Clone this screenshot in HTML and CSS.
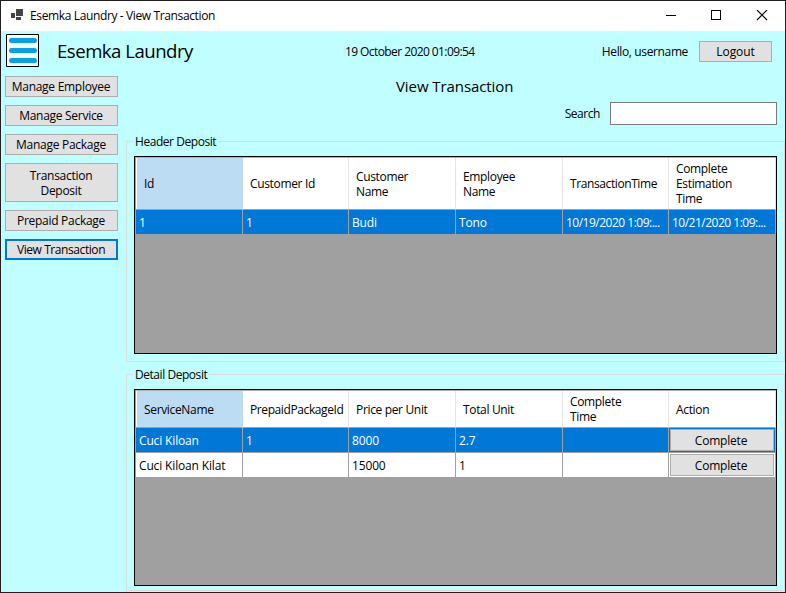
FILE: index.html
```html
<!DOCTYPE html>
<html lang="en">
<head>
<meta charset="utf-8">
<title>Esemka Laundry - View Transaction</title>
<link rel="stylesheet" href="styles.css">
</head>
<body>
<div class="window">
  <header class="titlebar">
    <svg class="app-icon" width="12" height="12" viewBox="0 0 12 12" shape-rendering="crispEdges"><path fill="#444" d="M5 0h7v7H5zM0 4h4v5H0zM5 8h5v3H5z"/></svg>
    <span class="caption">Esemka Laundry - View Transaction</span>
    <svg class="controls" width="102" height="12" viewBox="0 0 102 12" fill="none" stroke="#000"><path d="M0 5.500h10M45.500 .5h9v9h-9z" shape-rendering="crispEdges"/><path d="M91 0l10 10M101 0l-10 10" stroke-width="1.100"/></svg>
  </header>
  <div class="topbar">
    <svg class="menu" width="33" height="33" viewBox="0 0 33 33"><path fill="#fff" stroke="#000" d="M.5 .5h32v32H.5z"/><path d="M5.500 6.500h23M5.500 16.500h23M5.500 26.500h23" stroke="#00a2e8" stroke-width="5" stroke-linecap="round"/></svg>
    <h1 class="brand">Esemka Laundry</h1>
    <span class="clock">19 October 2020 01:09:54</span>
    <span class="hello">Hello, username</span>
    <button class="btn logout">Logout</button>
  </div>
  <div class="body">
    <nav class="side">
      <button class="btn">Manage Employee</button>
      <button class="btn">Manage Service</button>
      <button class="btn">Manage Package</button>
      <button class="btn tall">Transaction<br>Deposit</button>
      <button class="btn">Prepaid Package</button>
      <button class="btn current">View Transaction</button>
    </nav>
    <main class="main">
      <h2 class="page-title">View Transaction</h2>
      <div class="search"><label for="q">Search</label><input id="q" type="text"></div>
      <fieldset class="group first">
        <legend>Header Deposit</legend>
        <div class="grid">
          <div class="row head"><div class="sel">Id</div><div>Customer Id</div><div>Customer<br>Name</div><div>Employee<br>Name</div><div class="tight">TransactionTime</div><div>Complete<br>Estimation<br>Time</div></div>
          <div class="row active"><div>1</div><div>1</div><div>Budi</div><div>Tono</div><div class="date">10/19/2020 1:09:...</div><div class="date">10/21/2020 1:09:...</div></div>
        </div>
      </fieldset>
      <fieldset class="group second">
        <legend>Detail Deposit</legend>
        <div class="grid">
          <div class="row head"><div class="sel">ServiceName</div><div class="tight">PrepaidPackageId</div><div>Price per Unit</div><div>Total Unit</div><div>Complete<br>Time</div><div>Action</div></div>
          <div class="row active"><div>Cuci Kiloan</div><div>1</div><div>8000</div><div>2.7</div><div></div><div class="action"><button class="btn">Complete</button></div></div>
          <div class="row"><div>Cuci Kiloan Kilat</div><div></div><div>15000</div><div>1</div><div></div><div class="action"><button class="btn">Complete</button></div></div>
        </div>
      </fieldset>
    </main>
  </div>
</div>
</body>
</html>
```
FILE: styles.css
```css
* { box-sizing: border-box; }
body { margin: 0; font: 12px/15px "Open Sans", "Noto Sans", sans-serif; color: #000; }
h1, h2 { margin: 0; font-weight: 400; }
.window { width: 786px; height: 593px; border: 1px solid #231f20; background: #c0ffff; overflow: hidden; }
.titlebar { height: 30px; background: #fff; display: flex; align-items: center; padding: 0 17px 0 10px; }
.app-icon { margin-bottom: 2px; }
.caption { margin: 0 0 1px 7px; letter-spacing: -.37px; }
.controls { margin-left: auto; }
.topbar { height: 44px; display: flex; align-items: center; padding: 0 13px 4px 5px; }
.menu { margin-bottom: 1px; }
.brand { font-size: 18.6px; line-height: 26px; margin-left: 18px; width: 288px; white-space: nowrap; letter-spacing: -.5px; }
.clock { letter-spacing: -.58px; white-space: nowrap; }
.hello { margin-left: auto; letter-spacing: -.37px; }
.btn { display: block; font: inherit; color: #000; height: 21px; padding: 0; border: 1px solid #adadad; border-radius: 0; background: #e1e1e1; line-height: 15px; letter-spacing: -.2px; }
.logout { width: 73px; margin-left: 11px; letter-spacing: -.1px; }
.body { display: flex; }
.side { width: 113px; margin: 1px 0 0 4px; display: flex; flex-direction: column; gap: 8px; }
.side .btn { letter-spacing: -.28px; padding-right: 1px; }
.side .tall { height: 39px; }
.side .current { border: 2px solid #0078d7; letter-spacing: -.42px; }
.main { width: 659px; margin-left: 8px; }
.page-title { font-size: 15px; line-height: 20px; margin: 1px 0 0 270px; padding-bottom: 1px; letter-spacing: -.08px; }
.search { display: flex; justify-content: flex-end; align-items: center; gap: 10px; margin: 5px 8px 0 0; letter-spacing: -.45px; }
.search input { width: 167px; height: 23px; border: 1px solid #7a7a7a; background: #fff; padding: 0; }
.group { margin: 0; padding: 0 7px; border: 1px solid #dcdcdc; min-width: 0; }
.group legend { height: 15px; padding: 0 2px; margin-left: -1px; letter-spacing: -.45px; }
.first { height: 228px; margin-top: 9px; }
.second { height: 224px; margin-top: 5px; }
.grid { width: 643px; background: #a0a0a0; border: 1px solid #000; padding-left: 1px; margin-top: 7px; }
.first .grid { height: 198px; }
.second .grid { height: 197px; }
.row { display: grid; grid-template-columns: 107px 106px 107px 107px 106px 107px; height: 25px; background: #fff; letter-spacing: -.15px; }
.row > div { display: flex; align-items: center; border-right: 1px solid #a0a0a0; border-bottom: 1px solid #a0a0a0; padding-left: 3px; white-space: nowrap; }
.row.active > div { background: #0078d7; color: #fff; }
.row:last-child > div { border-bottom: 0; height: 24px; }
.row:last-child { height: 24px; }
.row.head { border-top: 1px solid #b0b0b0; letter-spacing: -.34px; }
.first .head { height: 53px; }
.second .head { height: 38px; }
.row.head > div { border-right-color: #e5e5e5; padding-left: 7px; }
.row.head .sel { background: #bcdcf4; border-right-color: #bcdcf4; box-shadow: inset 1px 0 #fff; padding-left: 8px; }
.row .tight { letter-spacing: -.4px; }
.row .date { letter-spacing: -.5px; }
.row > .action { padding: 1px; align-items: stretch; }
.action .btn { width: 100%; height: auto; padding-right: 2px; }
```
